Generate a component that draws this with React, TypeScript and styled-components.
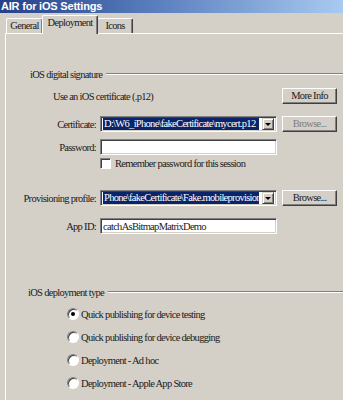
import styled, { createGlobalStyle } from 'styled-components';

const GlobalStyle = createGlobalStyle`
  html, body {
    margin: 0;
    padding: 0;
    background: #d4d0c8;
    overflow: hidden;
  }
`;

const Window = styled.div`
  width: 343px;
  height: 400px;
  background: #d4d0c8;
  display: flex;
  flex-direction: column;
  overflow: hidden;
  font-family: "Liberation Serif", "Times New Roman", serif;
  font-size: 10.5px;
  letter-spacing: -0.7px;
  color: #1a1a1a;
`;

const TitleBar = styled.div`
  height: 13px;
  flex: none;
  padding-left: 1px;
  background: linear-gradient(90deg, #23418a 0%, #5a7ebd 45%, #a8caf0 100%);
  color: #fff;
  font: bold 11px "Liberation Sans", Arial, sans-serif;
  letter-spacing: -0.2px;
  line-height: 13px;
`;

const TabStrip = styled.div`
  height: 20px;
  flex: none;
  display: flex;
  align-items: flex-end;
  padding-left: 6px;
`;

const Tab = styled.div<{ $active?: boolean; $w: number }>`
  position: relative;
  z-index: ${p => (p.$active ? 1 : 0)};
  box-sizing: border-box;
  width: ${p => p.$w}px;
  height: ${p => (p.$active ? 19 : 15)}px;
  margin: 0 ${p => (p.$active ? -1 : 0)}px ${p => (p.$active ? -1 : 0)}px;
  border: 1px solid #fff;
  border-bottom: none;
  border-right-color: #404040;
  border-radius: 2px 2px 0 0;
  box-shadow: inset -1px 0 #808080;
  background: #d4d0c8;
  text-align: center;
  line-height: ${p => (p.$active ? 13 : 14)}px;
  white-space: nowrap;
`;

const Panel = styled.div`
  flex: 1;
  margin-left: 5px;
  border-top: 1px solid #fff;
  border-left: 1px solid #fff;
  display: flex;
  flex-direction: column;
`;

const SectionHead = styled.div<{ $mt: number; $indent: number }>`
  display: flex;
  align-items: center;
  gap: 4px;
  height: 12px;
  margin-top: ${p => p.$mt}px;
  padding-left: ${p => p.$indent}px;
  white-space: nowrap;

  &::after {
    content: "";
    flex: 1;
    border-top: 1px solid #808080;
    border-bottom: 1px solid #fff;
  }
`;

const FormRow = styled.div<{ $mt: number; $h: number }>`
  display: grid;
  grid-template-columns: 94px 182px 55px;
  align-items: center;
  height: ${p => p.$h}px;
  margin-top: ${p => p.$mt}px;
`;

const Label = styled.div`
  text-align: right;
  padding-right: 4px;
  white-space: nowrap;
`;

const Note = styled.div`
  grid-column: 1 / 3;
  padding-left: 47px;
  white-space: nowrap;
`;

const Sunken = styled.div`
  box-sizing: border-box;
  width: 177px;
  height: 16px;
  background: #fff;
  border: 1px solid;
  border-color: #808080 #fff #fff #808080;
  box-shadow: inset 1px 1px #404040, inset -1px -1px #d4d0c8;
  display: flex;
  align-items: center;
  padding: 0 2px;
  overflow: hidden;
  white-space: nowrap;
`;

const Selected = styled.span`
  flex: 1;
  min-width: 0;
  height: 12px;
  line-height: 12px;
  padding-left: 1px;
  background: #0a246a;
  color: #fff;
  white-space: nowrap;
`;

const DropButton = styled.span`
  flex: none;
  box-sizing: border-box;
  width: 12px;
  height: 12px;
  margin-left: 3px;
  background: #d4d0c8;
  border: 1px solid;
  border-color: #d4d0c8 #404040 #404040 #d4d0c8;
  box-shadow: inset 1px 1px #fff, inset -1px -1px #808080;
  display: flex;
  align-items: center;
  justify-content: center;

  &::before {
    content: "";
    border-left: 3px solid transparent;
    border-right: 3px solid transparent;
    border-top: 3px solid #000;
  }
`;

const Button = styled.div<{ $dim?: boolean }>`
  box-sizing: border-box;
  width: 55px;
  height: 16px;
  background: #d4d0c8;
  border: 1px solid;
  border-color: #fff #404040 #404040 #fff;
  box-shadow: inset -1px -1px #808080;
  color: ${p => (p.$dim ? '#7c7c7c' : '#222')};
  text-align: center;
  line-height: 14px;
  white-space: nowrap;
`;

const CheckRow = styled.div`
  grid-column: 2 / 4;
  display: flex;
  align-items: center;
  gap: 4px;
  white-space: nowrap;
`;

const CheckBox = styled.span`
  box-sizing: border-box;
  width: 11px;
  height: 11px;
  background: #fff;
  border: 1px solid;
  border-color: #808080 #fff #fff #808080;
  box-shadow: inset 1px 1px #404040;
`;

const RadioRow = styled.div<{ $mt: number }>`
  display: flex;
  align-items: center;
  gap: 2px;
  height: 12px;
  margin-top: ${p => p.$mt}px;
  padding-left: 61px;
  white-space: nowrap;
`;

const Radio = styled.span<{ $on?: boolean }>`
  box-sizing: border-box;
  width: 12px;
  height: 12px;
  border-radius: 50%;
  background: #fff;
  border: 1px solid;
  border-color: #808080 #fff #fff #808080;
  box-shadow: inset 1px 1px #404040;
  display: flex;
  align-items: center;
  justify-content: center;

  &::after {
    content: "";
    width: 4px;
    height: 4px;
    border-radius: 50%;
    background: ${p => (p.$on ? '#000' : 'transparent')};
  }
`;

const deployTypes = [
  'Quick publishing for device testing',
  'Quick publishing for device debugging',
  'Deployment - Ad hoc',
  'Deployment - Apple App Store',
];

export default function App() {
  return (
    <>
      <GlobalStyle />
      <Window>
        <TitleBar>AIR for iOS Settings</TitleBar>
        <TabStrip>
          <Tab $w={37}>General</Tab>
          <Tab $w={56} $active>Deployment</Tab>
          <Tab $w={36}>Icons</Tab>
        </TabStrip>
        <Panel>
          <SectionHead $mt={34} $indent={24}>iOS digital signature</SectionHead>

          <FormRow $mt={8} $h={16}>
            <Note>Use an iOS certificate (.p12)</Note>
            <Button>More Info</Button>
          </FormRow>

          <FormRow $mt={12} $h={16}>
            <Label>Certificate:</Label>
            <Sunken>
              <Selected>D:\W6_iPhone\fakeCertificate\mycert.p12</Selected>
              <DropButton />
            </Sunken>
            <Button $dim>Browse...</Button>
          </FormRow>

          <FormRow $mt={7} $h={15}>
            <Label>Password:</Label>
            <Sunken />
          </FormRow>

          <FormRow $mt={3} $h={12}>
            <CheckRow>
              <CheckBox />
              Remember password for this session
            </CheckRow>
          </FormRow>

          <FormRow $mt={21} $h={16}>
            <Label>Provisioning profile:</Label>
            <Sunken>
              <Selected>Phone\fakeCertificate\Fake.mobileprovision</Selected>
              <DropButton />
            </Sunken>
            <Button>Browse...</Button>
          </FormRow>

          <FormRow $mt={12} $h={15}>
            <Label>App ID:</Label>
            <Sunken>catchAsBitmapMatrixDemo</Sunken>
          </FormRow>

          <SectionHead $mt={53} $indent={22}>iOS deployment type</SectionHead>

          {deployTypes.map((t, i) => (
            <RadioRow key={t} $mt={i === 0 ? 10 : 11}>
              <Radio $on={i === 0} />
              {t}
            </RadioRow>
          ))}
        </Panel>
      </Window>
    </>
  );
}
